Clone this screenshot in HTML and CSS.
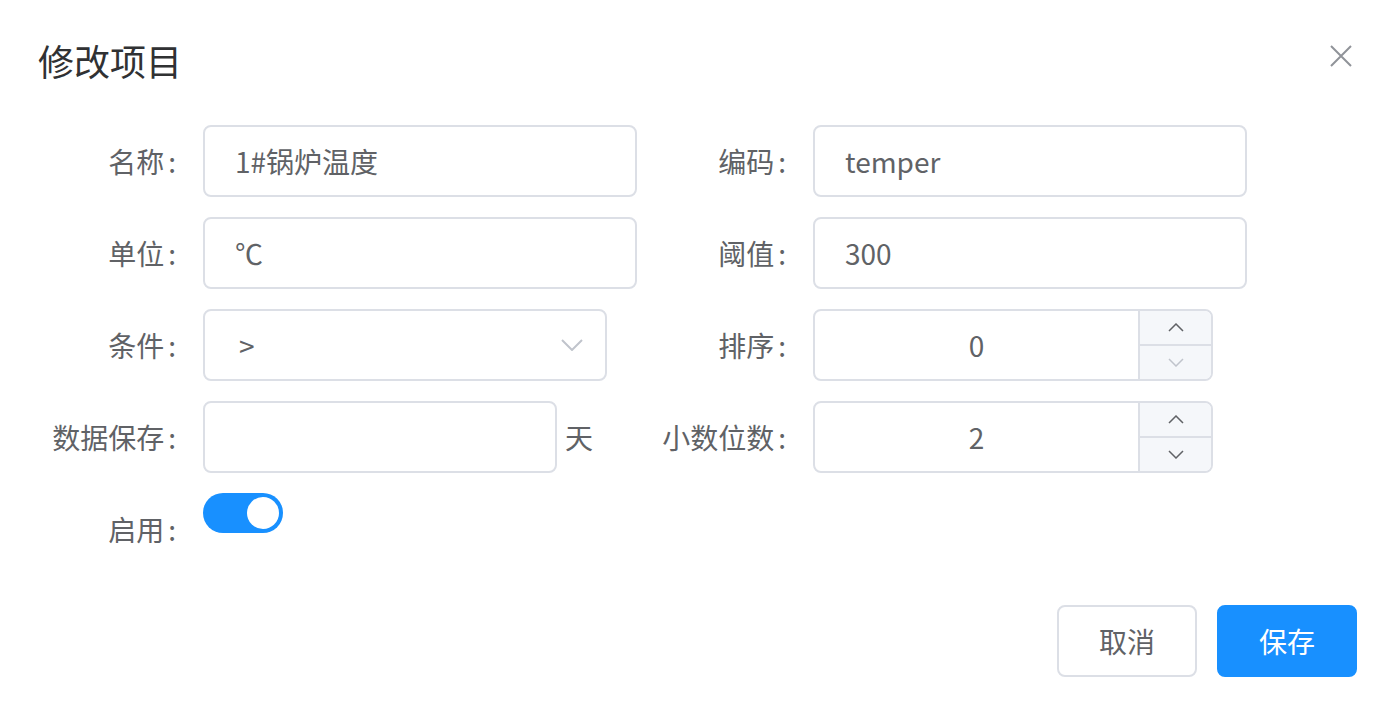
FILE: index.html
```html
<!DOCTYPE html>
<html lang="zh">
<head>
    <meta charset="UTF-8" />
    <title>修改项目</title>
    <link rel="stylesheet" href="styles.css">
</head>
<body>

<div class="dialog">
    <div class="dialog-header">
        <span class="dialog-title">修改项目</span>
        <button class="dialog-close" aria-label="关闭">
            <svg width="22" height="22" viewBox="0 0 22 22"><path d="M1 1L21 21M21 1L1 21" stroke="#909399" stroke-width="2" fill="none"/></svg>
        </button>
    </div>

    <form class="form">
        <div class="form-item">
            <label class="form-label">名称<span class="colon">:</span></label>
            <div class="form-content"><input class="input" type="text" value="1#锅炉温度"></div>
        </div>
        <div class="form-item">
            <label class="form-label">编码<span class="colon">:</span></label>
            <div class="form-content"><input class="input" type="text" value="temper"></div>
        </div>

        <div class="form-item">
            <label class="form-label">单位<span class="colon">:</span></label>
            <div class="form-content"><input class="input" type="text" value="℃"></div>
        </div>
        <div class="form-item">
            <label class="form-label">阈值<span class="colon">:</span></label>
            <div class="form-content"><input class="input" type="text" value="300"></div>
        </div>

        <div class="form-item">
            <label class="form-label">条件<span class="colon">:</span></label>
            <div class="form-content">
                <div class="select">
                    <span>&gt;</span>
                    <svg width="22" height="12" viewBox="0 0 22 12"><path d="M1 1L11 11L21 1" stroke="#c0c4cc" stroke-width="2" fill="none"/></svg>
                </div>
            </div>
        </div>
        <div class="form-item">
            <label class="form-label">排序<span class="colon">:</span></label>
            <div class="form-content">
                <div class="number">
                    <span class="number-value">0</span>
                    <div class="number-btns">
                        <span class="number-btn"><svg width="16" height="9" viewBox="0 0 16 9"><path d="M1 8L8 1L15 8" stroke="#606266" stroke-width="1.5" fill="none"/></svg></span>
                        <span class="number-btn"><svg width="16" height="9" viewBox="0 0 16 9"><path d="M1 1L8 8L15 1" stroke="#c0c4cc" stroke-width="1.5" fill="none"/></svg></span>
                    </div>
                </div>
            </div>
        </div>

        <div class="form-item">
            <label class="form-label">数据保存<span class="colon">:</span></label>
            <div class="form-content">
                <input class="input input-short" type="text" value="">
                <span class="suffix">天</span>
            </div>
        </div>
        <div class="form-item">
            <label class="form-label">小数位数<span class="colon">:</span></label>
            <div class="form-content">
                <div class="number">
                    <span class="number-value">2</span>
                    <div class="number-btns">
                        <span class="number-btn"><svg width="16" height="9" viewBox="0 0 16 9"><path d="M1 8L8 1L15 8" stroke="#606266" stroke-width="1.5" fill="none"/></svg></span>
                        <span class="number-btn"><svg width="16" height="9" viewBox="0 0 16 9"><path d="M1 1L8 8L15 1" stroke="#606266" stroke-width="1.5" fill="none"/></svg></span>
                    </div>
                </div>
            </div>
        </div>

        <div class="form-item">
            <label class="form-label">启用<span class="colon">:</span></label>
            <div class="form-content">
                <span class="switch"><span class="switch-knob"></span></span>
            </div>
        </div>
    </form>

    <div class="dialog-footer">
        <button class="btn">取消</button>
        <button class="btn btn-primary">保存</button>
    </div>
</div>

</body>
</html>
```

FILE: styles.css
```css
* {
    box-sizing: border-box;
}

body {
    margin: 0;
    background: #fff;
    font-family: "Noto Sans CJK SC", "Noto Sans", sans-serif;
    color: #606266;
}

.dialog {
    width: 1391px;
    padding: 36px 34px 34px 38px;
}

.dialog-header {
    display: flex;
    justify-content: space-between;
    align-items: center;
    height: 48px;
}

.dialog-title {
    font-size: 36px;
    line-height: 48px;
    color: #303133;
}

.dialog-close {
    border: none;
    background: none;
    padding: 0;
    margin-right: 5px;
    margin-top: -8px;
    display: flex;
    cursor: pointer;
}

.form {
    display: grid;
    grid-template-columns: 610px 610px;
    row-gap: 20px;
    margin-top: 41px;
}

.form-item {
    display: flex;
    align-items: flex-start;
}

.form-label {
    width: 165px;
    flex: none;
    text-align: right;
    padding-right: 27px;
    font-size: 28px;
    line-height: 72px;
}

.colon {
    margin-left: 4px;
}

.form-content {
    display: flex;
    align-items: center;
    min-height: 72px;
}

.input {
    width: 434px;
    height: 72px;
    border: 2px solid #dcdfe6;
    border-radius: 8px;
    padding: 0 30px;
    font-family: inherit;
    font-size: 28px;
    color: #606266;
    outline: none;
}

.input-short {
    width: 354px;
}

.suffix {
    font-size: 28px;
    margin-left: 8px;
}

.select {
    width: 404px;
    height: 72px;
    border: 2px solid #dcdfe6;
    border-radius: 8px;
    padding: 0 22px 0 34px;
    display: flex;
    align-items: center;
    justify-content: space-between;
    font-size: 28px;
}

.number {
    width: 400px;
    height: 72px;
    border: 2px solid #dcdfe6;
    border-radius: 8px;
    display: flex;
    overflow: hidden;
}

.number-value {
    flex: 1;
    text-align: center;
    font-size: 28px;
    line-height: 68px;
}

.number-btns {
    width: 73px;
    display: flex;
    flex-direction: column;
    border-left: 2px solid #dcdfe6;
    background: #f5f7fa;
}

.number-btn {
    flex: 1;
    display: flex;
    align-items: center;
    justify-content: center;
}

.number-btn + .number-btn {
    border-top: 2px solid #dcdfe6;
}

.switch {
    width: 80px;
    height: 40px;
    border-radius: 20px;
    background: #1890ff;
    display: flex;
    align-items: center;
    justify-content: flex-end;
    padding-right: 4px;
    align-self: flex-start;
}

.switch-knob {
    width: 32px;
    height: 32px;
    border-radius: 50%;
    background: #fff;
}

.dialog-footer {
    display: flex;
    justify-content: flex-end;
    gap: 20px;
    margin-top: 40px;
}

.btn {
    width: 140px;
    height: 72px;
    border: 2px solid #dcdfe6;
    border-radius: 8px;
    background: #fff;
    color: #606266;
    font-family: inherit;
    font-size: 28px;
    cursor: pointer;
}

.btn-primary {
    background: #1890ff;
    border-color: #1890ff;
    color: #fff;
}
```
